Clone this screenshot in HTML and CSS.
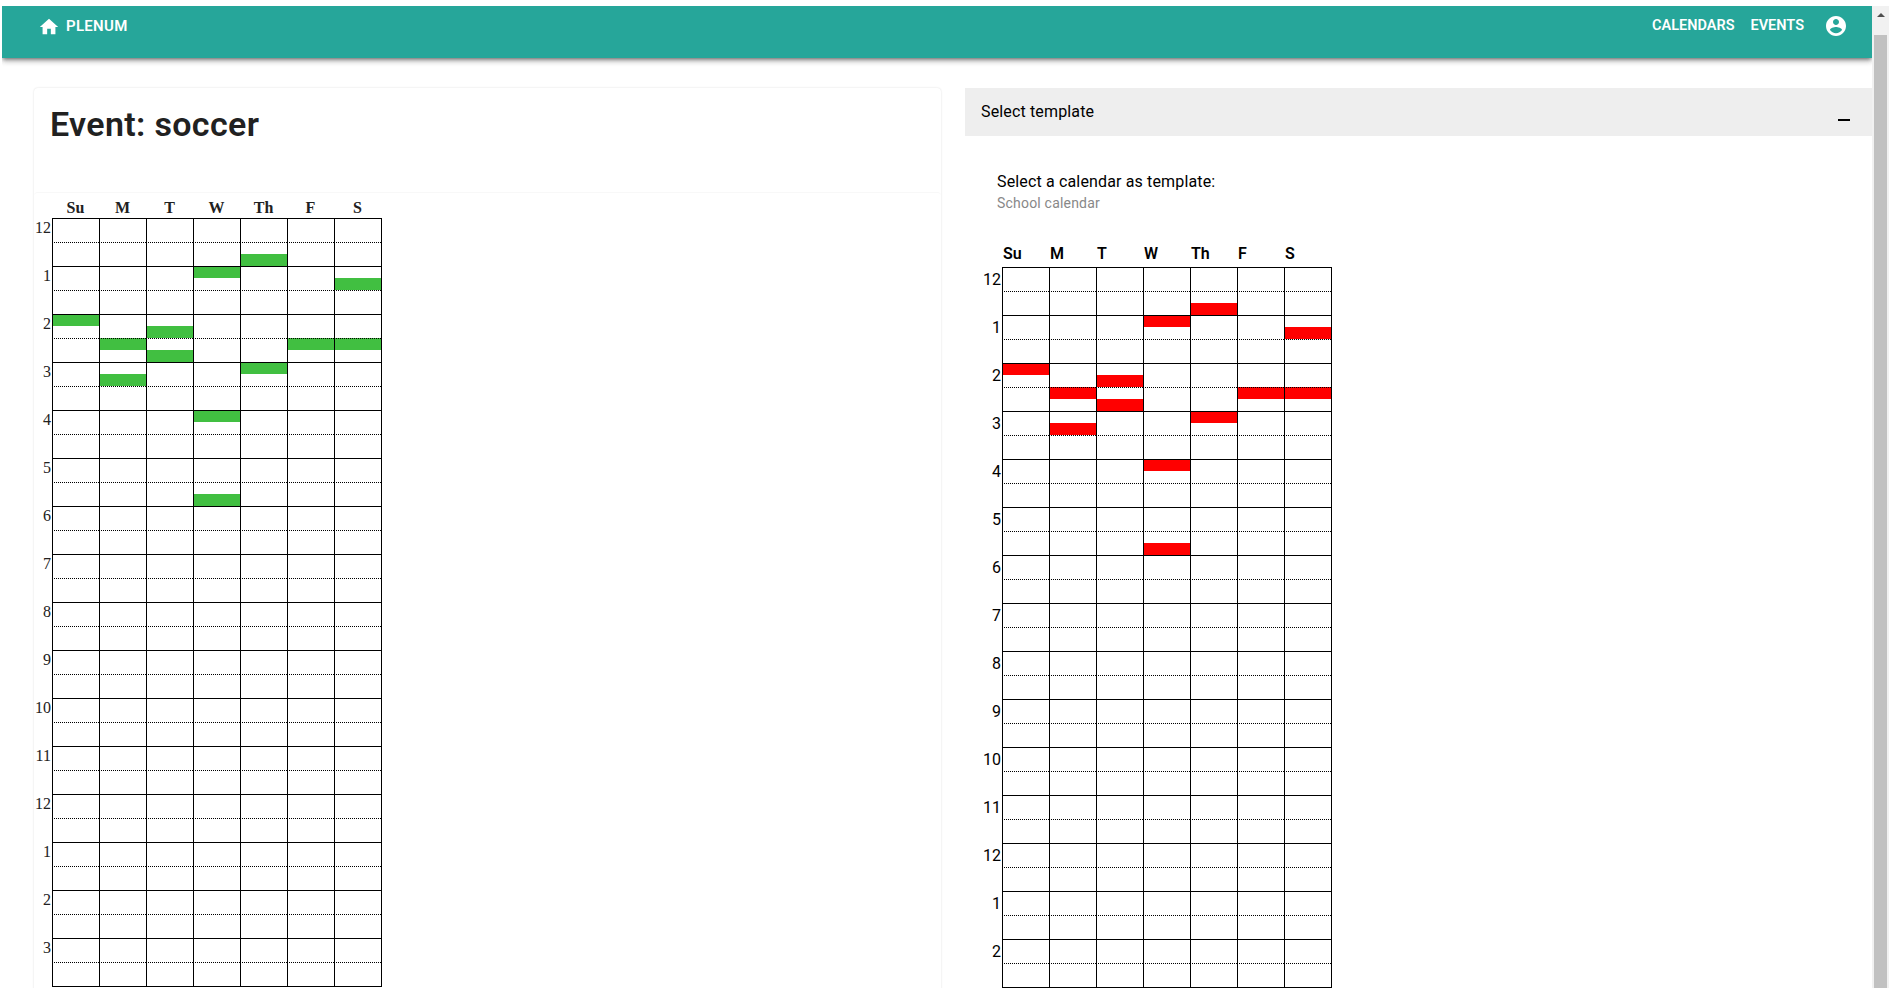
FILE: index.html
```html
<!DOCTYPE html>
<html lang="en">
<head>
<meta charset="utf-8">
<title>Plenum</title>
<link rel="stylesheet" href="styles.css">
</head>
<body>
<div class="window">
  <div class="page">
    <nav class="navbar">
      <a class="brand">
        <svg class="home-icon" viewBox="0 0 24 24"><path d="M10 20v-6h4v6h5v-8h3L12 3 2 12h3v8z"/></svg>
        <span class="brand-name">PLENUM</span>
      </a>
      <div class="links">
        <a class="link calendars">CALENDARS</a>
        <a class="link events">EVENTS</a>
        <svg class="account-icon" viewBox="0 0 24 24"><path d="M12 2C6.48 2 2 6.48 2 12s4.480 10 10 10 10-4.480 10-10S17.520 2 12 2zm0 3c1.660 0 3 1.340 3 3s-1.340 3-3 3-3-1.340-3-3 1.340-3 3-3zm0 14.200c-2.500 0-4.710-1.280-6-3.220.03-1.990 4-3.080 6-3.080 1.990 0 5.970 1.090 6 3.080-1.290 1.940-3.500 3.220-6 3.220z"/></svg>
      </div>
    </nav>
    <main class="content">
      <section class="event-card">
        <header class="card-title"><h1 class="title">Event: soccer</h1></header>
        <div class="card-body"><div class="calendar mine" data-hours="16"></div></div>
      </section>
      <section class="template">
        <header class="panel-head"><span class="panel-title">Select template</span><span class="minus"></span></header>
        <div class="panel-body">
          <div class="prompt">Select a calendar as template:</div>
          <div class="choice">School calendar</div>
          <div class="calendar other" data-hours="15"></div>
        </div>
      </section>
    </main>
  </div>
  <div class="scrollbar"><span class="arrow"></span><div class="thumb"></div></div>
</div>
<script src="calendar.js"></script>
</body>
</html>
```
FILE: styles.css
```css
* { box-sizing: border-box; }
body { margin: 0; background: #fff; color: #000; font-family: Roboto, sans-serif; font-size: 16px; overflow: hidden; }
.window { display: flex; height: 988px; padding: 6px 7px 0 2px; overflow: hidden; }
.page { width: 1870px; height: 982px; }
.navbar { display: flex; justify-content: space-between; height: 52px; padding: 0 24px 0 36px; background: #26a69a; color: #fff; box-shadow: 0 2px 4px -1px rgba(0,0,0,.5), 0 4px 5px rgba(0,0,0,.14), 0 1px 8px rgba(0,0,0,.1); font-size: 14.5px; font-weight: 600; line-height: 20px; clip-path: inset(0 0 -16px 0); }
.brand, .links { display: flex; align-items: flex-start; padding-top: 10px; }
.home-icon { width: 22px; height: 22px; fill: #fff; }
.brand-name { margin-left: 6px; font-size: 15px; letter-spacing: .3px; }
.calendars { margin-right: 16px; }
.events { margin-right: 20px; }
.account-icon { width: 24px; height: 24px; margin-top: -2px; fill: #fff; }
.content { display: flex; padding: 30px 0 0 32px; }
.event-card { flex: none; width: 907px; height: 940px; border-radius: 4px; box-shadow: 0 0 2px rgba(0,0,0,.15); }
.card-title { height: 104px; padding: 16px 16px 0; }
.title { margin: 0; font-size: 34px; line-height: 40px; font-weight: 600; letter-spacing: .35px; color: #212121; }
.card-body { border-top: 1px solid #f8f8f8; border-radius: 4px; }
.template { width: 907px; margin-left: 24px; }
.panel-head { display: flex; justify-content: space-between; height: 48px; padding: 14px 22px 0 16px; background: #eee; }
.panel-title, .prompt { line-height: 20px; letter-spacing: .15px; }
.minus { width: 12px; height: 2px; margin-top: 17px; background: #000; }
.panel-body { padding: 36px 0 0 32px; }
.choice { margin-top: 1px; line-height: 20px; font-size: 14px; letter-spacing: .2px; color: #888; }
.calendar { width: 347px; }
.days { display: grid; grid-template-columns: repeat(7, 47px); font-weight: bold; }
.hour { display: flex; height: 48px; }
.label { flex: none; text-align: right; }
.slots { display: grid; grid-template-columns: repeat(7, 47px); grid-template-rows: repeat(4, 12px); grid-auto-flow: column; border-right: 1px solid #000; }
.slot { border-left: 1px solid #000; }
.slot.full { border-top: 1px solid #000; }
.slot.half { border-top: 1px dotted #000; }
.end { height: 1px; width: 330px; background: #000; }
.mine { font-family: "Liberation Serif", serif; color: #212121; }
.mine .days { margin-left: 18px; padding-top: 6px; height: 25px; line-height: 18px; text-align: center; }
.mine .label { width: 18px; padding-right: 1px; line-height: 19px; }
.mine .end { margin-left: 18px; }
.mine .busy { background: #41bf41; }
.other { margin: 30px 0 0 -16px; }
.other .days { margin-left: 21px; padding-left: 1px; height: 24px; line-height: 22px; font-weight: 600; }
.other .label { width: 21px; padding-right: 1px; line-height: 26px; }
.other .end { margin-left: 21px; }
.other .busy { background: #f00; }
.scrollbar { width: 17px; height: 982px; padding: 7px 2px 0; background: #f1f1f1; }
.arrow { display: block; width: 0; height: 4px; margin-left: 3px; border: 4px solid transparent; border-top: 0; border-bottom-color: #505050; }
.thumb { height: 953px; margin-top: 18px; background: #c1c1c1; }
```
FILE: calendar.js
```js
// Busy quarter-hours for each day, counted from midnight.
const days = ['Su', 'M', 'T', 'W', 'Th', 'F', 'S'];
const busy = [[8], [10, 13], [9, 11], [4, 16, 23], [3, 12], [10], [5, 10]];
const edges = [' full', '', ' half', ''];

document.querySelectorAll('.calendar').forEach(calendar => {
  let html = '<div class="days">' + days.map(d => `<span>${d}</span>`).join('') + '</div>';
  for (let h = 0; h < +calendar.dataset.hours; h++) {
    html += `<div class="hour"><span class="label">${h % 12 || 12}</span><div class="slots">`;
    days.forEach((_, d) => {
      for (let q = 0; q < 4; q++) {
        html += `<div class="slot${edges[q]}${busy[d].includes(h * 4 + q) ? ' busy' : ''}"></div>`;
      }
    });
    html += '</div></div>';
  }
  calendar.innerHTML = html + '<div class="end"></div>';
});
```
